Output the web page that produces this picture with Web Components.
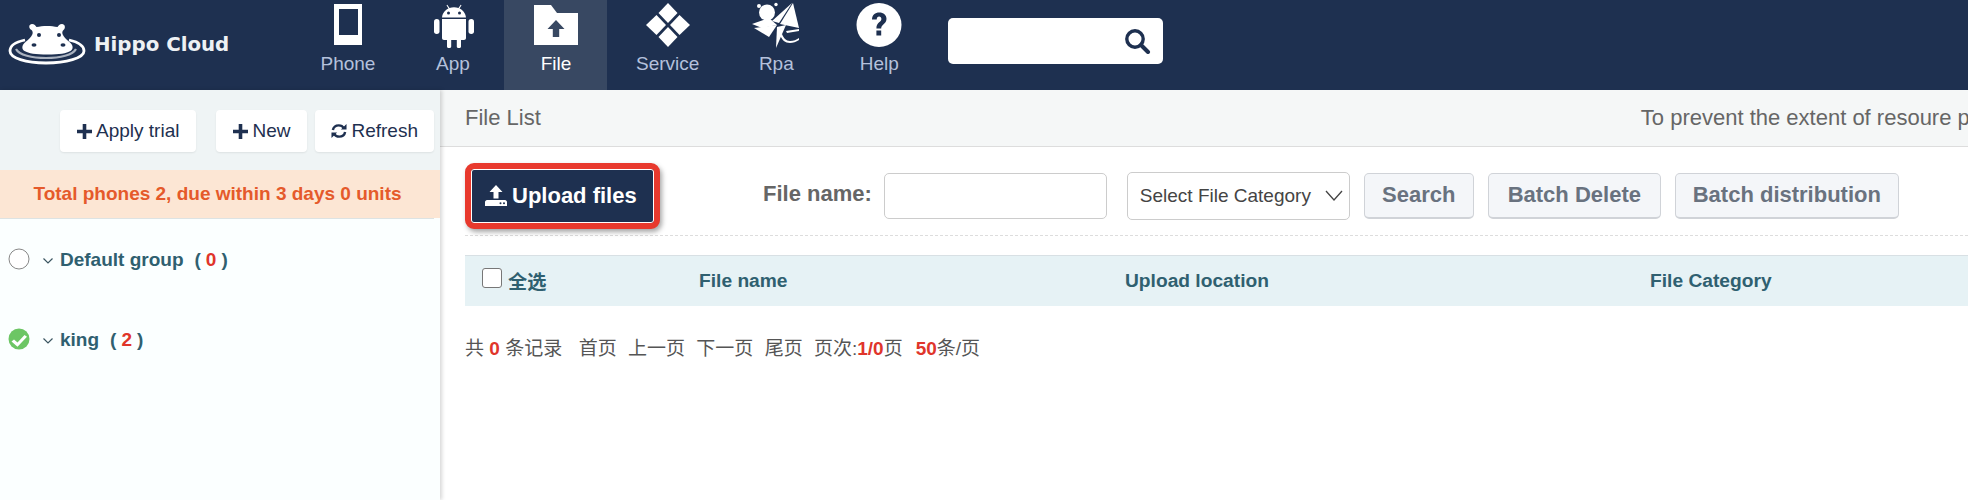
<!DOCTYPE html>
<html>
<head>
<meta charset="utf-8">
<title>Hippo Cloud</title>
<style>
	html, body { margin: 0; height: 100%; overflow: hidden; background: #fff; }
	body { font-family: "Liberation Sans", "Noto Sans CJK SC", sans-serif; }
</style>
</head>
<body>
<hc-app>
	<hc-header slot="header">
		<hc-nav icon="phone" style="padding-right:26px">Phone</hc-nav>
		<hc-nav icon="android">App</hc-nav>
		<hc-nav icon="folder" active>File</hc-nav>
		<hc-nav icon="service" style="padding-right:25.500px">Service</hc-nav>
		<hc-nav icon="rpa">Rpa</hc-nav>
		<hc-nav icon="help">Help</hc-nav>
	</hc-header>
	<hc-sidebar slot="side">
		<hc-tool-btn icon="plus" style="margin-right:20px">Apply trial</hc-tool-btn>
		<hc-tool-btn icon="plus" style="margin-right:8px">New</hc-tool-btn>
		<hc-tool-btn icon="refresh" style="padding:0 16px">Refresh</hc-tool-btn>
		<hc-group slot="groups" name="Default group" count="0"></hc-group>
		<hc-group slot="groups" name="king" count="2" checked></hc-group>
	</hc-sidebar>
	<hc-file-panel slot="main"></hc-file-panel>
</hc-app>

<script>
	(function(window, document) {

		// small helper, every element here just sets its shadow html once
		function define(name, html, setup) {
			customElements.define(name, class extends HTMLElement {
				connectedCallback() {
					if (this.shadowRoot) return;
					var root = this.attachShadow({mode: 'open'});
					root.innerHTML = typeof html === 'function' ? html(this) : html;
					if (setup) setup(this, root);
				}
			});
		}

		var ICONS = {
			phone: '<svg width="46" height="46" viewBox="0 0 46 46"><path fill="#fff" fill-rule="evenodd" d="M9 2h28v41H9zM14 7v26h19V7z"/></svg>',
			android: '<svg width="46" height="46" viewBox="0 0 46 46"><g fill="#fff"><path d="M12 15.500c.5-4.500 3.500-7.800 6.500-9l-2-3.300.8-.5 2.200 3.300c2.900-1 6.100-1 9 0l2.200-3.300.8.5-2 3.300c3 1.200 6 4.500 6.500 9z"/><path d="M12 17h24v19c0 1.200-.8 2-2 2h-3v6.500c0 2.200-4.200 2.200-4.200 0V38h-5.600v6.500c0 2.200-4.200 2.200-4.200 0V38h-3c-1.200 0-2-.8-2-2z"/><rect x="4" y="17" width="5.500" height="15" rx="2.700"/><rect x="38.500" y="17" width="5.500" height="15" rx="2.700"/></g><circle cx="18.500" cy="11" r="1.500" fill="#1e3050"/><circle cx="29.500" cy="11" r="1.500" fill="#1e3050"/></svg>',
			folder: '<svg width="46" height="46" viewBox="0 0 46 46"><path fill="#fff" d="M1 3h17l6 8h21v32H1z"/><path fill="#384862" d="M23 18l8.500 9h-5.300v8h-6.400v-8h-5.300z"/></svg>',
			service: '<svg width="46" height="46" viewBox="0 0 46 46"><g fill="#fff"><path d="M23 1l9.500 10L23 21l-9.500-10z"/><path d="M11.500 13l9.500 10-9.500 10L1 23z"/><path d="M34.500 13L45 23l-10.500 10L25 23z"/><path d="M23 25l9.500 10L23 45l-9.500-10z"/></g></svg>',
			rpa: '<svg width="50" height="46" viewBox="0 0 50 46" style="margin:0 -2px"><g fill="#fff"><circle cx="16" cy="10.500" r="8"/><circle cx="8" cy="4" r="2"/><circle cx="25" cy="2.500" r="1.700"/><path d="M42 1l6 25-19-4z"/><path d="M41 1L21 19l7 2z"/><path d="M1 22l17-6 8 7-15 3z"/><path d="M3 26l23-3-8 12z"/><path d="M26 25l9-2-10 23z"/><path d="M35 29l13-2v2l-12 2z"/><path d="M31 32c1.500 4 4 7 8 7 4 0 6-1 9-3v2c-3 2-6 3-9 3-5 0-8-3-10-8z"/></g></svg>',
			help: '<svg width="46" height="46" viewBox="0 0 46 46"><ellipse cx="23" cy="23" rx="22.500" ry="22" fill="#fff"/><path d="M16 17.500c0-4.500 3.200-7 7.300-7 4.200 0 7.200 2.500 7.200 6.300 0 5.500-5.300 5.400-5.300 9.700h-4.800c0-6.500 5-6.300 5-9.500 0-1.500-.9-2.600-2.300-2.600-1.500 0-2.300 1.100-2.400 3.100z" fill="#1e3050"/><rect x="20.400" y="28.500" width="4.800" height="5" fill="#1e3050"/></svg>'
		};

		define('hc-app', `
			<style>
				:host { display: flex; flex-direction: column; width: 100%; height: 500px; overflow: hidden; }
				.body { display: flex; flex: 1; min-height: 0; }
			</style>
			<slot name="header"></slot>
			<div class="body"><slot name="side"></slot><slot name="main"></slot></div>
		`);

		define('hc-logo', `
			<style>
				:host { display: flex; align-items: center; width: 292px; padding-left: 8px; box-sizing: border-box; }
				svg { display: block; margin-top: 0; flex: none; }
				span { font: bold 19.800px "DejaVu Sans", sans-serif; color: #eef1f4; margin-left: 8px; margin-top: -2px; white-space: nowrap; }
			</style>
			<svg width="78" height="44" viewBox="0 0 78 44">
				<path fill="none" stroke="#fff" stroke-width="2.800" d="M17 17C7 19 2 23 2 28c0 7 16 12 36 12s38-5 38-12c0-5-6-9-15-11"/>
				<path fill="none" stroke="#aab2bf" stroke-width="2.200" d="M8 26c3 6 16 9 30 9s27-3 30-9"/>
				<path fill="#fff" d="M24 1c2.500 0 3.500 1.500 4.500 3 6-1.500 15-1.500 21 0 1-1.500 2-3 4.500-3 3 0 4 4 1.500 6-1 1-1.500 2-1 4 1 3 3.500 5 7 8 4 3.500 4 7 1 9-4 2.500-11 3.500-23 3.500s-19-1-23-3.500c-3-2-3-5.500 1-9 3.500-3 6-5 7-8 .5-2 0-3-1-4C20 5 21 1 24 1z"/>
				<circle cx="31" cy="12" r="2" fill="#1e3050"/><circle cx="51" cy="12" r="2" fill="#1e3050"/>
				<ellipse cx="26" cy="22" rx="2.500" ry="1.800" fill="#1e3050"/><ellipse cx="55" cy="22" rx="2.500" ry="1.800" fill="#1e3050"/>
			</svg>
			<span>Hippo Cloud</span>
		`);

		define('hc-header', `
			<style>
				:host { display: flex; align-items: stretch; height: 90px; flex: none; background: #1e3050; }
				.nav { display: flex; }
				.search { align-self: flex-start; display: flex; align-items: center; justify-content: flex-end; box-sizing: border-box;
					width: 215px; height: 46px; margin: 18px 0 0 17px; padding-right: 12px; background: #fff; border-radius: 5px; }
			</style>
			<hc-logo></hc-logo>
			<div class="nav"><slot></slot></div>
			<div class="search">
				<svg width="27" height="26" viewBox="0 0 27 26"><circle cx="11" cy="11" r="8.200" fill="none" stroke="#1e3050" stroke-width="3.400"/><path d="M17 17l7 7" stroke="#1e3050" stroke-width="4" stroke-linecap="round"/></svg>
			</div>
		`);

		define('hc-nav', function(el) {
			return `
			<style>
				:host { display: flex; flex-direction: column; align-items: center; box-sizing: border-box; height: 90px; padding: 2px 28.500px 0; color: #b4c1dc; font-size: 19px; }
				:host([active]) { background: #384862; color: #fff; }
				svg { display: block; height: 46px; }
				.label { margin-top: 4px; line-height: 24px; white-space: nowrap; }
			</style>
			${ICONS[el.getAttribute('icon')]}
			<div class="label"><slot></slot></div>`;
		});

		define('hc-tool-btn', function(el) {
			var icon = el.getAttribute('icon') === 'plus'
				? '<svg width="15" height="15" viewBox="0 0 15 15"><path fill="#1e3050" d="M5.700 0h3.600v5.700H15v3.600H9.300V15H5.700V9.300H0V5.700h5.700z"/></svg>'
				: '<svg width="16" height="16" viewBox="0 0 17 16"><path fill="none" stroke="#1e3050" stroke-width="2.600" d="M2 7c.6-3 3-5 6.300-5 2.500 0 4.300 1.200 5.300 3M15 9c-.6 3-3 5-6.300 5-2.500 0-4.300-1.200-5.300-3"/><path fill="#1e3050" d="M16.500.5v6h-6zM.5 15.500v-6h6z"/></svg>';
			return `
			<style>
				:host { display: inline-flex; align-items: center; justify-content: center; box-sizing: border-box; height: 42px; padding: 0 17px; gap: 4px;
					background: #fff; border-radius: 4px; box-shadow: 0 1px 2px rgba(0,0,0,.08); color: #1e3050; font-size: 19px; white-space: nowrap; }
			</style>
			${icon}<slot></slot>`;
		});

		define('hc-sidebar', `
			<style>
				:host { display: flex; flex-direction: column; flex: none; width: 440px; background: #fbffff; box-shadow: 2px 0 4px rgba(0,0,0,.16); position: relative; z-index: 1; }
				.tools { display: flex; justify-content: flex-end; height: 80px; box-sizing: border-box; padding: 20px 6px 0 0; background: #eff4f5; }
				.notice { height: 48px; line-height: 48px; padding-right: 5px; text-align: center; background: #fce6d4; color: #e55a2b; font-size: 19px; font-weight: bold; }
				.rule { height: 1px; margin-right: 6px; background: #dde3e3; }
				.groups { display: flex; flex-direction: column; padding-top: 25px; gap: 48px; }
			</style>
			<div class="tools"><slot></slot></div>
			<div class="notice">Total phones 2, due within 3 days 0 units</div>
			<div class="rule"></div>
			<div class="groups"><slot name="groups"></slot></div>
		`);

		define('hc-group', function(el) {
			var mark = el.hasAttribute('checked')
				? '<svg width="22" height="22" viewBox="0 0 22 22"><circle cx="11" cy="11" r="10.500" fill="#6cc664"/><path d="M3.500 13.500l2.500-2 3.500 3 7-7.500 2.500 1.800-9.500 10z" fill="#fff"/></svg>'
				: '<svg width="22" height="22" viewBox="0 0 22 22"><circle cx="11" cy="11" r="10" fill="#fff" stroke="#888" stroke-width="1"/></svg>';
			return `
			<style>
				:host { display: flex; align-items: center; height: 32px; padding-left: 8px; color: #2f6070; font-size: 19px; font-weight: bold; white-space: nowrap; }
				svg { display: block; flex: none; margin-top: -3px; }
				.chev { margin: 2px 7px 0 13px; }
				.count { color: #e0352b; margin: 0 5px; }
				.open { margin-left: 11px; }
			</style>
			${mark}
			<svg class="chev" width="10" height="6" viewBox="0 0 10 6"><path d="M.5.500L5 5 9.500.5" fill="none" stroke="#3b5560" stroke-width="1.200"/></svg>
			<span>${el.getAttribute('name')}</span><span class="open">(</span><span class="count">${el.getAttribute('count')}</span><span>)</span>`;
		});

		define('hc-gray-btn', `
			<style>
				:host { display: inline-flex; align-items: center; justify-content: center; box-sizing: border-box; height: 46px; border: 1px solid #d0d3d8; border-bottom-width: 2px;
					border-radius: 5px; background: #f4f6f9; color: #69727f; font-size: 22px; font-weight: bold; white-space: nowrap; }
			</style>
			<slot></slot>
		`);

		define('hc-file-panel', `
			<style>
				:host { display: block; flex: 1; min-width: 0; overflow: hidden; color: #666; }
				.title { display: flex; align-items: center; height: 57px; box-sizing: border-box; padding-left: 25px; background: #f5f7f7; border-bottom: 1px solid #ddd; font-size: 22px; white-space: nowrap; }
				.tip { margin-left: 1100px; }
				.toolbar { display: flex; align-items: center; height: 89px; box-sizing: border-box; margin-left: 25px; padding-top: 9px; border-bottom: 1px dashed #ddd; }
				.upload { display: flex; align-items: center; gap: 5px; box-sizing: border-box; width: 195px; height: 66px; padding-left: 14px; border: 6px solid #e8392d; border-radius: 9px; background: #1e3050;
					box-shadow: inset 0 0 0 1px #fff, 2px 3px 5px rgba(0,0,0,.35); color: #fff; font-size: 22px; font-weight: bold; white-space: nowrap; margin-right: 103px; }
				label { font-size: 22px; font-weight: bold; margin: -3px 12px 0 0; white-space: nowrap; }
				.input { box-sizing: border-box; width: 223px; height: 46px; border: 1px solid #ccc; border-radius: 5px; background: #fff; margin-right: 20px; }
				.select { display: flex; align-items: center; justify-content: space-between; box-sizing: border-box; width: 223px; height: 48px; padding: 0 6px 0 12px; border: 1px solid #ccc; border-radius: 5px; color: #444; font-size: 19px; margin-right: 14px; white-space: nowrap; }
				.btns { display: flex; gap: 14px; }
				.thead { display: flex; align-items: center; height: 51px; box-sizing: border-box; margin: 19px 0 0 25px; background: #e6f2f5; border-top: 1px solid #d8e0e4; color: #2f6070; font-size: 19.200px; font-weight: bold; white-space: nowrap; }
				.all { display: flex; align-items: center; width: 234px; padding-left: 17px; box-sizing: border-box; }
				.box { box-sizing: border-box; width: 20px; height: 20px; margin: -7px 6px 0 0; border: 1.500px solid #777; border-radius: 3px; background: #fff; }
				.name { width: 426px; }
				.loc { width: 525px; }
				.pager { margin: 31px 0 0 25px; font-size: 19px; line-height: 24px; color: #555; white-space: nowrap; }
				.pager b { color: #e0352b; }
				.pager span { margin-left: 11.300px; }
				.pager span:last-child { margin-left: 13px; }
			</style>
			<div class="title">File List<span class="tip">To prevent the extent of resoure p</span></div>
			<div class="toolbar">
				<div class="upload">
					<svg width="22" height="21" viewBox="0 0 22 21"><path fill="#fff" d="M11 0l6.500 7H13.500v6.500h-5V7H4.500z"/><path fill="#fff" d="M2 15h18c1 0 2 1 2 2v4H0v-4c0-1 1-2 2-2z"/><circle cx="15.500" cy="18.200" r="1" fill="#1e3050"/><circle cx="19" cy="18.200" r="1" fill="#1e3050"/></svg>
					Upload files
				</div>
				<label>File name:</label>
				<div class="input"></div>
				<div class="select">Select File Category
					<svg width="18" height="11" viewBox="0 0 18 11"><path d="M1 1l8 9 8-9" fill="none" stroke="#444" stroke-width="1.300"/></svg>
				</div>
				<div class="btns">
					<hc-gray-btn style="width:110px">Search</hc-gray-btn>
					<hc-gray-btn style="width:173px">Batch Delete</hc-gray-btn>
					<hc-gray-btn style="width:224px">Batch distribution</hc-gray-btn>
				</div>
			</div>
			<div class="thead">
				<div class="all"><div class="box"></div>全选</div>
				<div class="name">File name</div>
				<div class="loc">Upload location</div>
				<div>File Category</div>
			</div>
			<div class="pager">共 <b>0</b> 条记录<span>&nbsp;首页</span><span>上一页</span><span>下一页</span><span>尾页</span><span>页次:<b>1/0</b>页</span><span><b>50</b>条/页</span></div>
		`);

	})(window, document);
</script>
</body>
</html>
